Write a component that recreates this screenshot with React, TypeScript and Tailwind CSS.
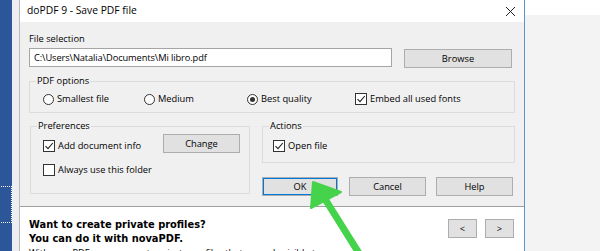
import React from 'react';

const Radio = ({ label, checked = false }: { label: string; checked?: boolean }) => (
  <div className="flex h-[14px] items-center gap-[3px]">
    <span className="flex size-[11px] items-center justify-center rounded-full border border-[#333] bg-white">
      {checked && <span className="size-[5px] rounded-full bg-[#333]" />}
    </span>
    <span>{label}</span>
  </div>
);

const Check = ({ label, checked = false }: { label: string; checked?: boolean }) => (
  <div className="flex h-[14px] items-center gap-[3px]">
    <span className="flex size-[12px] items-center justify-center border border-[#333] bg-white">
      {checked && (
        <svg width="10" height="10" viewBox="0 0 10 10">
          <path d="M1.5 5.2 L4 7.7 L8.8 2" fill="none" stroke="#222" strokeWidth="1.1" />
        </svg>
      )}
    </span>
    <span>{label}</span>
  </div>
);

const Button = ({ label, className = '' }: { label: string; className?: string }) => (
  <button
    className={`flex h-[19px] items-center justify-center border border-[#adadad] bg-[#e1e1e1] text-black ${className}`}
  >
    {label}
  </button>
);

export default function App() {
  return (
    <div className="relative flex h-[251px] w-[600px] overflow-hidden bg-[#f3f3f3] font-['Open_Sans',sans-serif] text-[9.3px] text-black">
      {/* desktop behind the dialog */}
      <div className="flex w-[19px] shrink-0">
        <div className="w-[12px] bg-[#2b579a]">
          <div className="-ml-px mt-[186px] h-[37px] w-[13px] border border-dotted border-white" />
        </div>
        <div className="w-[7px] bg-[#eceef1]" />
      </div>

      {/* dialog */}
      <div className="flex w-[506px] shrink-0 flex-col border-l border-r border-l-[#b9b9b9] border-r-[#5b93d3]">
        <div className="flex h-[22px] shrink-0 items-center justify-between bg-white pl-[7px] pr-[8px] text-[10.3px]">
          <span>doPDF 9 - Save PDF file</span>
          <svg width="11" height="11" viewBox="0 0 11 11">
            <path d="M1 1 L10 10 M10 1 L1 10" stroke="#222" strokeWidth="1" />
          </svg>
        </div>

        <div className="shrink-0 bg-[#f0f0f0] pb-[10px] pl-[9px] pr-[9px] pt-[10px]">
          <div className="h-[14px] leading-[14px]">File selection</div>
          <div className="mt-[2px] flex h-[20px] items-start">
            <div className="flex h-[19px] w-[363px] items-center border border-[#a5a5a5] bg-white pl-[4px] tracking-[-0.1px]">
              C:\Users\Natalia\Documents\Mi libro.pdf
            </div>
            <Button label="Browse" className="ml-[12px] mt-px w-[108px]" />
          </div>

          <fieldset className="mt-[5px] border border-[#dcdcdc]">
            <legend className="ml-[6px] px-[1px] leading-[16px]">PDF options</legend>
            <div className="flex pb-[6px] pl-[13px] pt-[3px]">
              <div className="w-[101px]">
                <Radio label="Smallest file" />
              </div>
              <div className="w-[103px]">
                <Radio label="Medium" />
              </div>
              <div className="w-[108px]">
                <Radio label="Best quality" checked />
              </div>
              <Check label="Embed all used fonts" checked />
            </div>
          </fieldset>

          <div className="mt-[5px] flex items-start gap-[12px]">
            <fieldset className="ml-px w-[220px] border border-[#dcdcdc]">
              <legend className="ml-[6px] px-[1px] leading-[16px]">Preferences</legend>
              <div className="pb-[16px] pl-[12px] pr-[9px]">
                <div className="flex h-[19px] items-start justify-between">
                  <div className="mt-[5px]">
                    <Check label="Add document info" checked />
                  </div>
                  <Button label="Change" className="w-[77px]" />
                </div>
                <div className="mt-[10px]">
                  <Check label="Always use this folder" />
                </div>
              </div>
            </fieldset>

            <div className="flex flex-1 flex-col">
              <fieldset className="border border-[#dcdcdc]">
                <legend className="ml-[6px] px-[1px] leading-[16px]">Actions</legend>
                <div className="pb-[9px] pl-[10px] pt-[5px]">
                  <Check label="Open file" checked />
                </div>
              </fieldset>
              <div className="mt-[14px] flex">
                <Button label="OK" className="w-[76px] border-[#0078d7] shadow-[inset_0_0_0_1px_#0078d7]" />
                <Button label="Cancel" className="ml-[11px] w-[77px]" />
                <Button label="Help" className="ml-[10px] w-[77px]" />
              </div>
            </div>
          </div>
        </div>

        <div className="h-px shrink-0 bg-[#a0a0a0]" />

        <div className="flex shrink-0 bg-white pb-[10px] pl-[9px] pr-[10px] pt-[11px]">
          <div className="flex-1">
            <p className="font-['DejaVu_Sans',sans-serif] text-[9.85px] font-bold leading-[14px]">
              Want to create private profiles?
              <br />
              You can do it with novaPDF.
            </p>
            <p className="text-[9.3px] leading-[14px]">
              With novaPDF you can create private profiles that are only visible to you.
            </p>
          </div>
          <div className="mt-px flex h-[18px] gap-[8px]">
            <Button label="<" className="h-[18px] w-[29px]" />
            <Button label=">" className="h-[18px] w-[29px]" />
          </div>
        </div>
      </div>

      {/* window behind, to the right */}
      <div className="flex flex-1 flex-col">
        <div className="h-[15px] shrink-0 bg-white" />
        <div className="flex-1 bg-[#f3f3f3]" />
      </div>

      {/* green pointer drawn over the OK button */}
      <svg className="pointer-events-none absolute left-0 top-0" width="600" height="251" viewBox="0 0 600 251">
        <line x1="325" y1="199" x2="362" y2="258" stroke="#45d34b" strokeWidth="7" strokeLinecap="round" />
        <polygon
          points="313,182 341,192 311,208"
          fill="#45d34b"
          stroke="#45d34b"
          strokeWidth="2"
          strokeLinejoin="round"
        />
      </svg>
    </div>
  );
}
